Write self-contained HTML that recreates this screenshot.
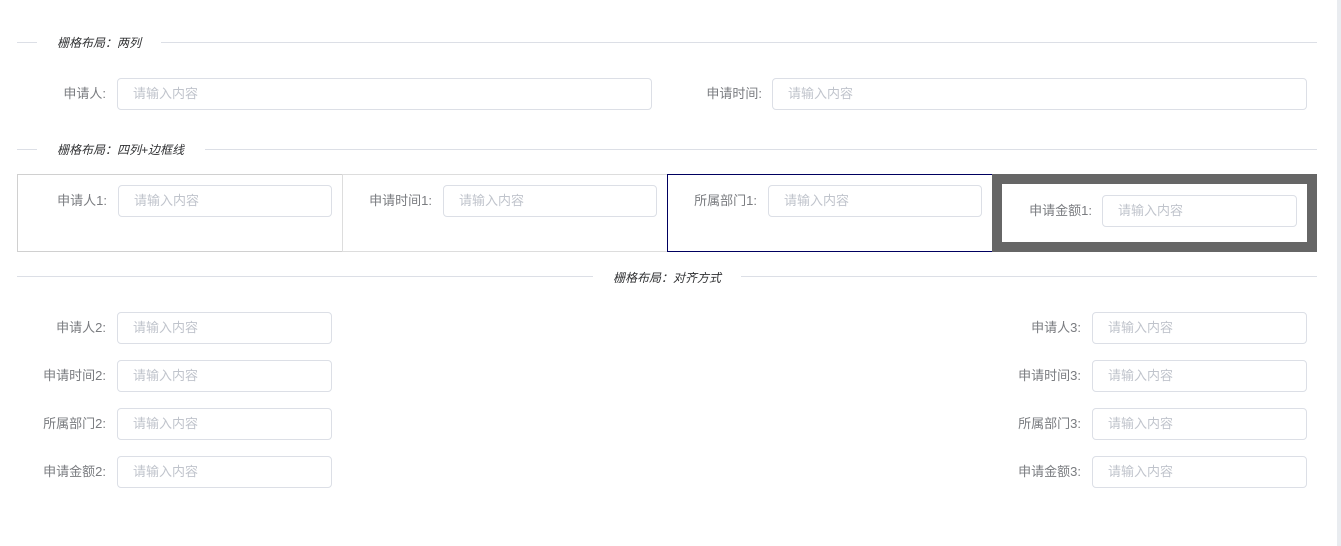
<!DOCTYPE html>
<html><head><meta charset="utf-8"><style>
*{margin:0;padding:0;box-sizing:border-box}
body{width:1341px;height:546px;background:#fff;position:relative;overflow:hidden;font-family:"Liberation Sans","Noto Sans CJK SC",sans-serif;font-size:13px;color:#606266}
.strip{position:absolute;left:1337px;top:0;width:4px;height:546px;background:#e9ecf0}
.hl{position:absolute;height:1px;background:#dcdfe6}
.dt{position:absolute;font-size:12px;font-style:italic;color:#303133;line-height:16px;white-space:nowrap}
.in{position:absolute;height:32px;border:1px solid #dcdfe6;border-radius:4px;color:#c0c4cc;font-size:13px;line-height:30px;padding-left:15px;background:#fff}
.lb{position:absolute;text-align:right;line-height:32px;white-space:nowrap;color:#7a7c80}
.cell{position:absolute;top:174px;height:78px}
</style></head><body>
<div class="strip"></div>

<div class="hl" style="left:17px;top:42px;width:20px"></div>
<div class="dt" style="left:57px;top:35px">栅格布局：两列</div>
<div class="hl" style="left:161px;top:42px;width:1156px"></div>

<div class="lb" style="left:17px;top:78px;width:89px">申请人:</div>
<div class="in" style="left:117px;top:78px;width:535px">请输入内容</div>
<div class="lb" style="left:667px;top:78px;width:95px">申请时间:</div>
<div class="in" style="left:772px;top:78px;width:535px">请输入内容</div>

<div class="hl" style="left:17px;top:149px;width:20px"></div>
<div class="dt" style="left:57px;top:142px">栅格布局：四列+边框线</div>
<div class="hl" style="left:205px;top:149px;width:1112px"></div>

<div class="cell" style="left:17px;width:326px;border:1px solid #d0d0d0;border-right:1px solid #ddd"></div>
<div class="cell" style="left:342px;width:326px;border:1px solid #ddd;border-left:none"></div>
<div class="cell" style="left:667px;width:326px;border:1px solid #000060"></div>
<div class="cell" style="left:992px;width:325px;border:10px solid #666"></div>

<div class="lb" style="left:17px;top:185px;width:90px">申请人1:</div>
<div class="in" style="left:118px;top:185px;width:214px">请输入内容</div>
<div class="lb" style="left:342px;top:185px;width:90px">申请时间1:</div>
<div class="in" style="left:443px;top:185px;width:214px">请输入内容</div>
<div class="lb" style="left:667px;top:185px;width:90px">所属部门1:</div>
<div class="in" style="left:768px;top:185px;width:214px">请输入内容</div>
<div class="lb" style="left:1002px;top:195px;width:90px">申请金额1:</div>
<div class="in" style="left:1102px;top:195px;width:195px">请输入内容</div>

<div class="hl" style="left:17px;top:276px;width:576px"></div>
<div class="dt" style="left:613px;top:270px">栅格布局：对齐方式</div>
<div class="hl" style="left:741px;top:276px;width:576px"></div>

<div class="lb" style="left:17px;top:312px;width:89px">申请人2:</div>
<div class="in" style="left:117px;top:312px;width:215px">请输入内容</div>
<div class="lb" style="left:17px;top:360px;width:89px">申请时间2:</div>
<div class="in" style="left:117px;top:360px;width:215px">请输入内容</div>
<div class="lb" style="left:17px;top:408px;width:89px">所属部门2:</div>
<div class="in" style="left:117px;top:408px;width:215px">请输入内容</div>
<div class="lb" style="left:17px;top:456px;width:89px">申请金额2:</div>
<div class="in" style="left:117px;top:456px;width:215px">请输入内容</div>

<div class="lb" style="left:980px;top:312px;width:101px">申请人3:</div>
<div class="in" style="left:1092px;top:312px;width:215px">请输入内容</div>
<div class="lb" style="left:980px;top:360px;width:101px">申请时间3:</div>
<div class="in" style="left:1092px;top:360px;width:215px">请输入内容</div>
<div class="lb" style="left:980px;top:408px;width:101px">所属部门3:</div>
<div class="in" style="left:1092px;top:408px;width:215px">请输入内容</div>
<div class="lb" style="left:980px;top:456px;width:101px">申请金额3:</div>
<div class="in" style="left:1092px;top:456px;width:215px">请输入内容</div>
</body></html>
